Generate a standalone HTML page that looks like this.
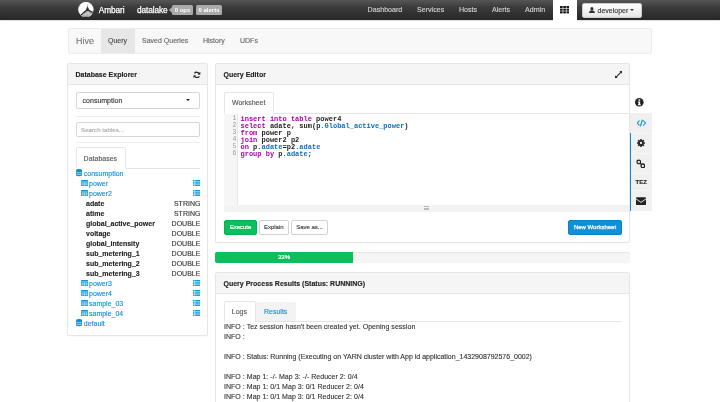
<!DOCTYPE html>
<html><head><meta charset="utf-8">
<style>
*{box-sizing:border-box;margin:0;padding:0}
html,body{width:720px;height:402px;overflow:hidden;background:#fff;font-family:"Liberation Sans",sans-serif;color:#333}
body{position:relative}
.abs{position:absolute}
.t{position:absolute;white-space:nowrap;line-height:1;-webkit-text-stroke:.12px currentColor}
#nav{left:0;top:0;width:720px;height:20px;background:linear-gradient(#565656,#3a3a3a 38%,#282828);box-shadow:0 .5px 1.5px rgba(0,0,0,.3)}
#nav .t{color:#d6d6d6;font-size:7.1px;top:7px}
.badge{position:absolute;top:5px;height:10px;background:#aaa;color:#fff;font-size:6px;font-weight:bold;border-radius:1.5px;line-height:10px;text-align:center}
.panel{position:absolute;border:1px solid #e6e6e6;border-radius:2px;background:#fff;box-shadow:0 .5px .5px rgba(0,0,0,.04)}
.ph{position:absolute;left:0;top:0;right:0;height:21px;background:#f5f5f5;border-bottom:1px solid #e6e6e6}
.ph .t{font-weight:bold;font-size:7px;top:7px;left:7.5px;color:#222}
.blue{color:#0f8fd6}
.tree .t{font-size:7px}
.log .t{font-size:7px;color:#333;letter-spacing:.03px}
.code .t{font-family:"Liberation Mono",monospace;font-size:7px;font-weight:bold;color:#222;-webkit-text-stroke:0}
.btn{height:15.5px;border:1px solid #d2d2d2;-webkit-text-stroke:.12px #333;border-radius:2px;background:#fff;font-size:6px;line-height:13.5px;text-align:center;color:#333}
.ln{font-weight:normal!important;color:#999!important;font-size:6.3px!important;margin-top:.4px}
.kw{color:#a0a}
.id{color:#0a6fc0}
</style></head><body><div id="root" style="position:absolute;left:0;top:0;width:720px;height:402px;will-change:transform">
<!-- top nav -->
<div id="nav" class="abs">
  <svg class="abs" style="left:77.9px;top:1.6px" width="15.8" height="15.3" viewBox="78 32 317 307"><defs><clipPath id="lc"><circle cx="236.5" cy="185" r="153"/></clipPath></defs><circle cx="236.5" cy="185" r="155" fill="#fbfbfb"/><g clip-path="url(#lc)"><path d="M120 330 L250 205 L292 205 L400 262 L400 345 L120 345Z" fill="#b0b0b0"/><path d="M268 78 L261 140 L247 152 L244 200 L294 200 L291 152 L277 140Z" fill="#2e2e2e"/><path d="M128 305 L250 198 L290 198 L395 255" stroke="#2a2a2a" stroke-width="26" fill="none"/><path d="M170 300 L200 262 M225 300 L245 262 M262 255 L300 255 M282 300 L305 265 M325 300 L350 272" stroke="#f4f4f4" stroke-width="13" fill="none"/><path d="M150 335 L330 335" stroke="#444" stroke-width="14"/></g></svg>
  <span class="t" style="left:98.8px;font-size:8.3px;top:6.2px;letter-spacing:-.12px;color:#fff;-webkit-text-stroke:.25px #fff">Ambari</span>
  <span class="t" style="left:137px;font-size:8.3px;top:6.2px;letter-spacing:-.12px;color:#fff;-webkit-text-stroke:.25px #fff">datalake</span>
  <div class="abs" style="left:168.6px;top:6.5px;width:0;height:0;border:3.5px solid transparent;border-right-color:#aaa;border-left:0"></div>
  <div class="badge" style="left:172px;width:21px">0 ops</div>
  <div class="badge" style="left:196px;width:26px">0 alerts</div>
  <span class="t" style="left:367.6px">Dashboard</span>
  <span class="t" style="left:417px">Services</span>
  <span class="t" style="left:459px">Hosts</span>
  <span class="t" style="left:492px">Alerts</span>
  <span class="t" style="left:525px">Admin</span>
  <div class="abs" style="left:552.6px;top:0;width:24px;height:22px;background:#fff"></div>
  <svg class="abs" style="left:560px;top:6.2px" width="9.2" height="7.4" viewBox="0 0 9 7.25" fill="#151515" preserveAspectRatio="none"><rect x="0" y="0" width="2.6" height="2.05"/><rect x="3.2" y="0" width="2.6" height="2.05"/><rect x="6.4" y="0" width="2.6" height="2.05"/><rect x="0" y="2.6" width="2.6" height="2.05"/><rect x="3.2" y="2.6" width="2.6" height="2.05"/><rect x="6.4" y="2.6" width="2.6" height="2.05"/><rect x="0" y="5.2" width="2.6" height="2.05"/><rect x="3.2" y="5.2" width="2.6" height="2.05"/><rect x="6.4" y="5.2" width="2.6" height="2.05"/></svg>
  <div class="abs" style="left:582px;top:3px;width:60px;height:14.6px;background:linear-gradient(#fff,#e6e6e6);border-radius:2px;border:1px solid #ccc"></div>
  <svg class="abs" style="left:589.2px;top:7.4px" width="5.8" height="6" viewBox="0 0 6 6" fill="#333"><circle cx="3" cy="1.6" r="1.6"/><path d="M0 6 Q0 3.2 3 3.2 Q6 3.2 6 6Z"/></svg>
  <span class="t" style="left:597.5px;color:#333;top:6.8px;font-size:7px">developer</span>
  <div class="abs" style="left:630px;top:9px;border:2px solid transparent;border-top-color:#333;border-bottom:0"></div>
</div>

<!-- hive nav -->
<div class="abs" style="left:68px;top:27.7px;width:584px;height:26px;background:#f8f8f8;border:1px solid #ececec;border-radius:2px"></div>
<div class="abs" style="left:101.3px;top:28.5px;width:33.3px;height:24.5px;background:#e7e7e7"></div>
<span class="t" style="left:76px;top:36.8px;font-size:9px;color:#777">Hive</span>
<span class="t" style="left:108px;top:37px;font-size:7px;color:#444">Query</span>
<span class="t" style="left:142px;top:37px;font-size:7px;color:#666">Saved Queries</span>
<span class="t" style="left:203px;top:37px;font-size:7px;color:#666">History</span>
<span class="t" style="left:240px;top:37px;font-size:7px;color:#666">UDFs</span>

<!-- database explorer -->
<div class="panel" style="left:67px;top:63px;width:141px;height:273px">
  <div class="ph"><span class="t">Database Explorer</span></div>
</div>
<svg class="abs" style="left:193.2px;top:70.5px" width="7.8" height="7.8" viewBox="0 0 16 16" fill="none" stroke="#222" stroke-width="2.6"><path d="M13.5 6.5 A6 6 0 0 0 3 5"/><path d="M2.5 9.5 A6 6 0 0 0 13 11"/><path d="M15 1.5 L15 7 L9.5 7Z" fill="#222" stroke="none"/><path d="M1 14.5 L1 9 L6.5 9Z" fill="#222" stroke="none"/></svg>
<div class="abs" style="left:76px;top:92px;width:124.4px;height:16.6px;border:1px solid #d6d6d6;border-radius:2px;background:#fff"></div>
<span class="t" style="left:82.6px;top:97.2px;font-size:7px;color:#333">consumption</span>
<div class="abs" style="left:185.7px;top:99.2px;border:2.8px solid transparent;border-top:2.8px solid #222;border-bottom:0"></div>
<div class="abs" style="left:76px;top:116px;width:124px;height:1px;background:#eee"></div>
<div class="abs" style="left:76px;top:122px;width:124.4px;height:15px;border:1px solid #d6d6d6;border-radius:2px;background:#fff"></div>
<span class="t" style="left:81px;top:126.6px;font-size:6.2px;color:#aaa">Search tables...</span>
<div class="abs" style="left:76px;top:142px;width:124px;height:1px;background:#eee"></div>
<!-- tab Databases -->
<div class="abs" style="left:76px;top:167.5px;width:124px;height:1px;background:#e4e4e4"></div>
<div class="abs" style="left:76px;top:147px;width:50px;height:22px;border:1px solid #e6e6e6;border-bottom:1px solid #fff;border-radius:2px 2px 0 0;background:#fff"></div>
<span class="t" style="left:83.6px;top:154.7px;font-size:7px;color:#555">Databases</span>

<div class="tree">
<svg width="0" height="0" style="position:absolute"><defs>
<g id="db"><path d="M0 1.2 A2.5 1.2 0 0 1 5 1.2 L5 5.8 A2.5 1.2 0 0 1 0 5.8Z" fill="#0f8fd6"/><path d="M0 2.6 A2.5 1 0 0 0 5 2.6 M0 4.3 A2.5 1 0 0 0 5 4.3" stroke="#fff" stroke-width=".5" fill="none"/></g>
<g id="tb"><rect x="0" y="0" width="6.5" height="6" rx=".7" fill="#1193d8"/><path d="M0 1.75H6.5M0 3.2H6.5M0 4.6H6.5M1.7 1.75V6M3.25 1.75V6M4.8 1.75V6" stroke="#fff" stroke-opacity=".75" stroke-width=".5"/></g>
<g id="ls"><rect x="0" y="0" width="7" height="6.4" fill="#129adb"/><path d="M0 1.6H7M0 3.2H7M0 4.8H7M1.6 0V6.4" stroke="#fff" stroke-width=".5"/></g>
</defs></svg>
<svg class="abs" style="left:75.8px;top:169.4px" width="6.2" height="7.3" viewBox="0 0 5 7" preserveAspectRatio="none"><use href="#db"/></svg><span class="t blue" style="left:83.8px;top:169.6px">consumption</span>
<svg class="abs" style="left:80.5px;top:179.5px" width="7.1" height="6.1" viewBox="0 0 6.5 6" preserveAspectRatio="none"><use href="#tb"/></svg><span class="t blue" style="left:89px;top:179.6px">power</span><svg class="abs" style="left:193px;top:179.8px" width="7.4" height="6.2" viewBox="0 0 7 6.4" preserveAspectRatio="none"><use href="#ls"/></svg>
<svg class="abs" style="left:80.5px;top:189.5px" width="7.1" height="6.1" viewBox="0 0 6.5 6" preserveAspectRatio="none"><use href="#tb"/></svg><span class="t blue" style="left:89px;top:189.6px">power2</span><svg class="abs" style="left:193px;top:189.8px" width="7.4" height="6.2" viewBox="0 0 7 6.4" preserveAspectRatio="none"><use href="#ls"/></svg>
<span class="t" style="left:86px;top:199.6px;font-weight:bold;color:#222">adate</span><span class="t" style="right:519.6px;top:199.6px;color:#333">STRING</span>
<span class="t" style="left:86px;top:209.6px;font-weight:bold;color:#222">atime</span><span class="t" style="right:519.6px;top:209.6px;color:#333">STRING</span>
<span class="t" style="left:86px;top:219.6px;font-weight:bold;color:#222">global_active_power</span><span class="t" style="right:519.6px;top:219.6px;color:#333">DOUBLE</span>
<span class="t" style="left:86px;top:229.6px;font-weight:bold;color:#222">voltage</span><span class="t" style="right:519.6px;top:229.6px;color:#333">DOUBLE</span>
<span class="t" style="left:86px;top:239.6px;font-weight:bold;color:#222">global_intensity</span><span class="t" style="right:519.6px;top:239.6px;color:#333">DOUBLE</span>
<span class="t" style="left:86px;top:249.6px;font-weight:bold;color:#222">sub_metering_1</span><span class="t" style="right:519.6px;top:249.6px;color:#333">DOUBLE</span>
<span class="t" style="left:86px;top:259.6px;font-weight:bold;color:#222">sub_metering_2</span><span class="t" style="right:519.6px;top:259.6px;color:#333">DOUBLE</span>
<span class="t" style="left:86px;top:269.6px;font-weight:bold;color:#222">sub_metering_3</span><span class="t" style="right:519.6px;top:269.6px;color:#333">DOUBLE</span>
<svg class="abs" style="left:80.5px;top:279.5px" width="7.1" height="6.1" viewBox="0 0 6.5 6" preserveAspectRatio="none"><use href="#tb"/></svg><span class="t blue" style="left:89px;top:279.6px">power3</span><svg class="abs" style="left:193px;top:279.8px" width="7.4" height="6.2" viewBox="0 0 7 6.4" preserveAspectRatio="none"><use href="#ls"/></svg>
<svg class="abs" style="left:80.5px;top:289.5px" width="7.1" height="6.1" viewBox="0 0 6.5 6" preserveAspectRatio="none"><use href="#tb"/></svg><span class="t blue" style="left:89px;top:289.6px">power4</span><svg class="abs" style="left:193px;top:289.8px" width="7.4" height="6.2" viewBox="0 0 7 6.4" preserveAspectRatio="none"><use href="#ls"/></svg>
<svg class="abs" style="left:80.5px;top:299.5px" width="7.1" height="6.1" viewBox="0 0 6.5 6" preserveAspectRatio="none"><use href="#tb"/></svg><span class="t blue" style="left:89px;top:299.6px">sample_03</span><svg class="abs" style="left:193px;top:299.8px" width="7.4" height="6.2" viewBox="0 0 7 6.4" preserveAspectRatio="none"><use href="#ls"/></svg>
<svg class="abs" style="left:80.5px;top:309.5px" width="7.1" height="6.1" viewBox="0 0 6.5 6" preserveAspectRatio="none"><use href="#tb"/></svg><span class="t blue" style="left:89px;top:309.6px">sample_04</span><svg class="abs" style="left:193px;top:309.8px" width="7.4" height="6.2" viewBox="0 0 7 6.4" preserveAspectRatio="none"><use href="#ls"/></svg>
<svg class="abs" style="left:75.8px;top:319.4px" width="6.2" height="7.3" viewBox="0 0 5 7" preserveAspectRatio="none"><use href="#db"/></svg><span class="t blue" style="left:83.8px;top:319.6px">default</span>
</div>

<!-- query editor -->
<div class="panel" style="left:215px;top:63px;width:415px;height:180px">
  <div class="ph"><span class="t">Query Editor</span></div>
</div>
<svg class="abs" style="left:615px;top:70.8px" width="7.2" height="7.2" viewBox="0 0 14 14" fill="#222"><path d="M14 0 L14 5.5 L11.96 3.46 L3.46 11.96 L5.5 14 L0 14 L0 8.5 L2.04 10.54 L10.54 2.04 L8.5 0Z"/></svg>
<div class="abs" style="left:224px;top:112.5px;width:405px;height:1px;background:#e4e4e4"></div>
<div class="abs" style="left:224px;top:92px;width:50px;height:21.5px;border:1px solid #e6e6e6;border-bottom:1px solid #fff;border-radius:2px 2px 0 0;background:#fff"></div>
<span class="t" style="left:232px;top:99px;font-size:7px;color:#555">Worksheet</span>
<div class="abs" style="left:224px;top:113.5px;width:14px;height:91px;background:#f6f6f6;border-right:1px solid #e6e6e6"></div>
<div class="abs" style="left:224px;top:204.5px;width:405px;height:7.3px;background:#f2f2f2"></div>
<div class="abs" style="left:424px;top:206px;width:5px;height:4px;border-top:1px solid #bbb;border-bottom:1px solid #bbb"><div style="margin-top:.5px;height:1px;background:#bbb"></div></div>
<div class="code">
<span class="t ln" style="left:232.4px;top:115.80px">1</span><span class="t" style="left:240.5px;top:115.80px"><span class="kw">insert into table</span> power4</span>
<span class="t ln" style="left:232.4px;top:122.85px">2</span><span class="t" style="left:240.5px;top:122.85px"><span class="kw">select</span> adate, sum(p<span class="id">.Global_active_power</span>)</span>
<span class="t ln" style="left:232.4px;top:129.90px">3</span><span class="t" style="left:240.5px;top:129.90px"><span class="kw">from</span> power p</span>
<span class="t ln" style="left:232.4px;top:136.95px">4</span><span class="t" style="left:240.5px;top:136.95px"><span class="kw">join</span> power2 p2</span>
<span class="t ln" style="left:232.4px;top:144.00px">5</span><span class="t" style="left:240.5px;top:144.00px"><span class="kw">on</span> p<span class="id">.adate</span>=p2<span class="id">.adate</span></span>
<span class="t ln" style="left:232.4px;top:151.05px">6</span><span class="t" style="left:240.5px;top:151.05px"><span class="kw">group by</span> p<span class="id">.adate</span>;</span>
</div>
<div class="abs btn" style="left:224px;top:219.5px;width:33px;background:#0bbf5c;border-color:#0aaf54;color:#fff;-webkit-text-stroke:.2px #fff">Execute</div>
<div class="abs btn" style="left:259px;top:219.5px;width:29.5px">Explain</div>
<div class="abs btn" style="left:291px;top:219.5px;width:37px">Save as...</div>
<div class="abs btn" style="left:568px;top:219.5px;width:54px;background:#0f90d8;border-color:#0d82c4;color:#fff;-webkit-text-stroke:.25px #fff">New Worksheet</div>

<!-- sidebar -->
<div class="abs" style="left:630px;top:113px;width:22px;height:98px;background:#f0f0f0"></div>
<div class="abs" style="left:629.5px;top:133px;width:1.5px;height:78px;background:#0f90d8"></div>
<div class="abs" style="left:631px;top:132.6px;width:21px;height:.8px;background:#f7f7f7"></div>
<div class="abs" style="left:631px;top:152.5px;width:21px;height:.8px;background:#f7f7f7"></div>
<div class="abs" style="left:631px;top:173.3px;width:21px;height:.8px;background:#f7f7f7"></div>
<div class="abs" style="left:631px;top:190px;width:21px;height:.8px;background:#f7f7f7"></div>
<svg class="abs" style="left:635px;top:98px" width="8.6" height="8.6" viewBox="0 0 10 10"><circle cx="5" cy="5" r="5" fill="#222"/><rect x="4.1" y="1.5" width="1.9" height="1.7" fill="#fff"/><path d="M3.4 4.1H6V7.3H6.8V8.4H3.4V7.3H4.1V5.2H3.4Z" fill="#fff"/></svg>
<svg class="abs" style="left:635.8px;top:119px" width="10.8" height="8" viewBox="0 0 10 8" fill="none" stroke="#0f90d8" stroke-width="1.1" stroke-linecap="round" stroke-linejoin="round"><path d="M2.8 1.8 L0.8 4 L2.8 6.2"/><path d="M7.2 1.8 L9.2 4 L7.2 6.2"/><path d="M5.9 1 L4.1 7"/></svg>
<svg class="abs" style="left:636.5px;top:139px" width="8" height="8" viewBox="0 0 16 16"><g fill="#222"><circle cx="8" cy="8" r="5.4"/><g id="teeth"><rect x="6.4" y="0" width="3.2" height="16" rx=".6"/><rect x="0" y="6.4" width="16" height="3.2" rx=".6"/></g><use href="#teeth" transform="rotate(45 8 8)"/></g><circle cx="8" cy="8" r="2.3" fill="#f0f0f0"/></svg>
<svg class="abs" style="left:635.8px;top:158.8px" width="9.6" height="9.6" viewBox="0 0 9 9" fill="none" stroke="#222" stroke-width="1.2"><circle cx="2.6" cy="2.8" r="1.7"/><circle cx="6.4" cy="6.4" r="1.7"/><path d="M3.6 3.8 L5.4 5.4"/></svg>
<span class="t" style="left:635.5px;top:179px;font-size:6px;font-weight:bold;color:#222">TEZ</span>
<svg class="abs" style="left:636px;top:196.6px" width="10" height="8.2" viewBox="0 0 9.5 7.5"><rect width="9.5" height="7.5" rx=".8" fill="#222"/><path d="M0 1.6 L4.75 5 L9.5 1.6" stroke="#f0f0f0" stroke-width=".9" fill="none"/></svg>

<!-- progress -->
<div class="abs" style="left:215px;top:252px;width:415px;height:11px;background:#f5f5f5;border-radius:2px;box-shadow:inset 0 .5px 1px rgba(0,0,0,.1)"></div>
<div class="abs" style="left:215px;top:252px;width:138px;height:11px;background:#0bbf5c;border-radius:2px 0 0 2px;color:#fff;font-size:6px;line-height:11px;-webkit-text-stroke:.2px #fff;text-align:center">33%</div>

<!-- results -->
<div class="panel" style="left:215px;top:272px;width:415px;height:140px">
  <div class="ph"><span class="t">Query Process Results (Status: RUNNING)</span></div>
</div>
<div class="abs" style="left:224px;top:321px;width:397px;height:1px;background:#e4e4e4"></div>
<div class="abs" style="left:224px;top:301px;width:32px;height:21px;border:1px solid #e6e6e6;border-bottom:1px solid #fff;border-radius:2px 2px 0 0;background:#fff"></div>
<div class="abs" style="left:256px;top:301.5px;width:40px;height:19.5px;background:#f3f3f3;border-radius:2px 2px 0 0"></div>
<span class="t" style="left:231.8px;top:307.8px;font-size:7px;color:#555">Logs</span>
<span class="t blue" style="left:264px;top:307.5px;font-size:7px">Results</span>
<div class="log">
<span class="t" style="left:224px;top:322.8px">INFO : Tez session hasn't been created yet. Opening session</span>
<span class="t" style="left:224px;top:332.8px">INFO :</span>
<span class="t" style="left:224px;top:352.8px;letter-spacing:0">INFO : Status: Running (Executing on YARN cluster with App id application_1432908792576_0002)</span>
<span class="t" style="left:224px;top:372.8px">INFO : Map 1: -/- Map 3: -/- Reducer 2: 0/4</span>
<span class="t" style="left:224px;top:382.8px">INFO : Map 1: 0/1 Map 3: 0/1 Reducer 2: 0/4</span>
<span class="t" style="left:224px;top:392.8px">INFO : Map 1: 0/1 Map 3: 0/1 Reducer 2: 0/4</span>
</div>
</div></body></html>
